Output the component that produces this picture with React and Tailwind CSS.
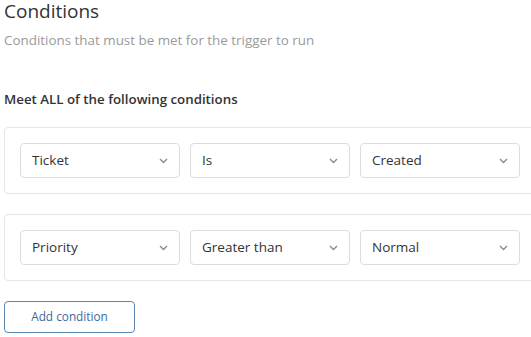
import { useState } from 'react'

function Chevron() {
  return (
    <svg width="9" height="6" viewBox="0 0 9 6" className="shrink-0">
      <path d="M1 1l3.5 3.5L8 1" fill="none" stroke="#8a8a8a" strokeWidth="1.4" />
    </svg>
  )
}

function Select({ value }) {
  return (
    <div className="w-[160px] h-[35px] shrink-0 flex items-center justify-between pl-[11px] pr-[11px] border border-[#dcdcdc] rounded-[4px] bg-white">
      <span className="text-[13.5px] text-[#333]">{value}</span>
      <Chevron />
    </div>
  )
}

function ConditionRow({ values }) {
  return (
    <div className="w-[532px] shrink-0 border border-[#e6e6e6] rounded-[4px] p-[15px] flex gap-[10px]">
      {values.map((v) => (
        <Select key={v} value={v} />
      ))}
    </div>
  )
}

function App() {
  const [rows] = useState([
    ['Ticket', 'Is', 'Created'],
    ['Priority', 'Greater than', 'Normal'],
  ])

  return (
    <div className="w-[531px] h-[337px] overflow-x-clip bg-white font-['Open_Sans',sans-serif]">
      <div className="pl-[4px]">
        <h1 className="text-[19px] leading-[22px] text-[#333]">Conditions</h1>
        <p className="text-[13.4px] leading-[18px] mt-[9px] text-[#9a9a9a]">
          Conditions that must be met for the trigger to run
        </p>
        <h2 className="text-[13.3px] font-semibold text-[#333] mt-[41px] leading-[18px]">
          Meet ALL of the following conditions
        </h2>
        <div className="mt-[19px] flex flex-col gap-[20px]">
          {rows.map((r) => (
            <ConditionRow key={r[0]} values={r} />
          ))}
        </div>
        <button className="mt-[20px] w-[131px] h-[32px] border border-[#5b87b3] rounded-[4px] text-[11.8px] text-[#3d6a99] bg-white">
          Add condition
        </button>
      </div>
    </div>
  )
}

export default App
